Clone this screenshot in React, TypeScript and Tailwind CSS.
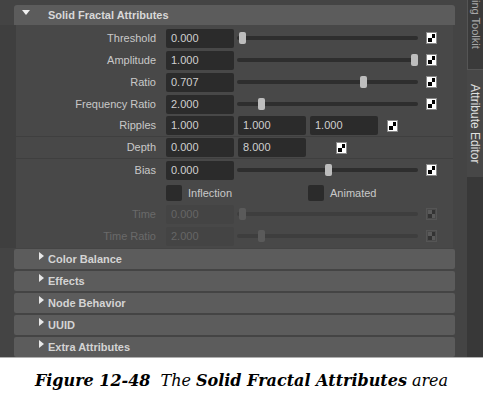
import React from "react";

const ui = { fontFamily: '"Liberation Sans", Arial, sans-serif' };

const Checker = ({ dim = false }: { dim?: boolean }) => (
  <div
    className={`w-[11px] h-[12px] p-[1px] border ${
      dim ? "border-[#555] bg-[#4a4a4a]" : "border-[#8a8a8a] bg-white"
    }`}
  >
    <div className="grid grid-cols-2 grid-rows-2 w-full h-full">
      <div className={dim ? "bg-[#5a5a5a]" : "bg-white"} />
      <div className={dim ? "bg-[#333]" : "bg-black"} />
      <div className={dim ? "bg-[#333]" : "bg-black"} />
      <div className={dim ? "bg-[#5a5a5a]" : "bg-white"} />
    </div>
  </div>
);

const Field = ({ value, dim = false, w = "w-[68px]" }: { value: string; dim?: boolean; w?: string }) => (
  <div
    className={`${w} h-[19px] rounded-[2px] flex items-center pl-[5px] text-[11px] ${
      dim ? "bg-[#444] text-[#666]" : "bg-[#2b2b2b] text-[#d0d0d0]"
    }`}
  >
    {value}
  </div>
);

const Slider = ({ pos, dim = false }: { pos: number; dim?: boolean }) => (
  <div className="relative w-[181px] h-[12px] ml-[3px] flex items-center">
    <div className={`w-full h-[4px] rounded-full ${dim ? "bg-[#3e3e3e]" : "bg-[#2e2e2e]"}`} />
    <div
      className={`absolute top-0 w-[7px] h-[12px] rounded-[2px] ${dim ? "bg-[#5a5a5a]" : "bg-[#bdbdbd]"}`}
      style={{ left: pos }}
    />
  </div>
);

const Label = ({ text, dim = false }: { text: string; dim?: boolean }) => (
  <div className={`w-[141px] pr-[1px] text-right text-[11px] ${dim ? "text-[#6a6a6a]" : "text-[#c8c8c8]"}`}>
    {text}
  </div>
);

const SliderRow = ({ label, value, pos, dim = false }: { label: string; value: string; pos: number; dim?: boolean }) => (
  <div className="h-[22px] flex items-center">
    <Label text={label} dim={dim} />
    <div className="ml-[9px]">
      <Field value={value} dim={dim} />
    </div>
    <Slider pos={pos} dim={dim} />
    <div className="ml-[8px]">
      <Checker dim={dim} />
    </div>
  </div>
);

const Collapsed = ({ title }: { title: string }) => (
  <div className="relative h-[20px] ml-[14px] w-[441px] bg-[#5c5c5c] rounded-[2px] flex items-center">
    <div className="absolute left-[25px] top-[3px] w-0 h-0 border-y-[4px] border-y-transparent border-l-[5px] border-l-[#e8e8e8]" />
    <span className="ml-[34px] text-[11px] font-bold text-[#d4d4d4]">{title}</span>
  </div>
);

export default function App() {
  return (
    <div className="w-[483px] h-[398px] bg-white flex flex-col" style={ui}>
      <div className="h-[357px] flex bg-[#444]">
        <div className="w-[467px] flex flex-col">
          <div className="h-[5px]" />
          <div className="relative h-[20px] ml-[14px] w-[441px] bg-[#5c5c5c] rounded-t-[3px] flex items-center">
            <div className="absolute left-[8px] top-[5px] w-0 h-0 border-x-[4px] border-x-transparent border-t-[5px] border-t-[#f0f0f0]" />
            <span className="ml-[34px] text-[11px] font-bold text-[#d8d8d8]">Solid Fractal Attributes</span>
          </div>
          <div className="flex">
            <div className="w-[16px] bg-[#3f3f3f]" />
            <div className="w-[437px] bg-[#484848] pt-[2px] h-[223px]">
              <SliderRow label="Threshold" value="0.000" pos={2} />
              <SliderRow label="Amplitude" value="1.000" pos={174} />
              <SliderRow label="Ratio" value="0.707" pos={123} />
              <SliderRow label="Frequency Ratio" value="2.000" pos={21} />
              <div className="h-[22px] flex items-center border-b border-[#3f3f3f]">
                <Label text="Ripples" />
                <div className="ml-[9px] flex gap-[4px]">
                  <Field value="1.000" />
                  <Field value="1.000" />
                  <Field value="1.000" />
                </div>
                <div className="ml-[9px]">
                  <Checker />
                </div>
              </div>
              <div className="h-[22px] flex items-center border-b border-[#3f3f3f]">
                <Label text="Depth" />
                <div className="ml-[9px] flex gap-[4px]">
                  <Field value="0.000" />
                  <Field value="8.000" />
                </div>
                <div className="ml-[30px]">
                  <Checker />
                </div>
              </div>
              <SliderRow label="Bias" value="0.000" pos={88} />
              <div className="h-[22px] flex items-center pt-[2px] text-[11px] text-[#c8c8c8]">
                <div className="w-[150px]" />
                <div className="w-[16px] h-[16px] bg-[#2b2b2b] rounded-[2px]" />
                <span className="ml-[6px] w-[120px]">Inflection</span>
                <div className="w-[16px] h-[16px] bg-[#2b2b2b] rounded-[2px]" />
                <span className="ml-[6px]">Animated</span>
              </div>
              <SliderRow label="Time" value="0.000" pos={2} dim />
              <SliderRow label="Time Ratio" value="2.000" pos={21} dim />
            </div>
          </div>
          <div className="flex flex-col gap-[2px] mt-[1px]">
            <Collapsed title="Color Balance" />
            <Collapsed title="Effects" />
            <Collapsed title="Node Behavior" />
            <Collapsed title="UUID" />
            <Collapsed title="Extra Attributes" />
          </div>
        </div>
        <div className="w-[16px] bg-[#383838] flex flex-col">
          <div className="h-[70px] border-l border-[#555] border-b bg-[#3a3a3a] flex justify-center overflow-hidden">
            <span className="text-[11px] leading-[16px] text-[#a8a8a8] [writing-mode:vertical-rl]">ing Toolkit</span>
          </div>
          <div className="h-[107px] bg-[#474747] flex justify-center pt-[14px]">
            <span className="text-[12px] leading-[16px] text-[#e0e0e0] [writing-mode:vertical-rl]">Attribute Editor</span>
          </div>
        </div>
      </div>
      <div className="h-[1px] bg-[#b0b0b0]" />
      <div
        className="flex-1 flex items-center justify-center text-[16px] italic text-black pt-[6px]"
        style={{ fontFamily: '"DejaVu Serif", "Liberation Serif", serif' }}
      >
        <span className="font-bold">Figure 12-48</span>
        <span className="ml-[10px]">The</span>
        <span className="ml-[5px] font-bold">Solid Fractal Attributes</span>
        <span className="ml-[5px]">area</span>
      </div>
    </div>
  );
}
